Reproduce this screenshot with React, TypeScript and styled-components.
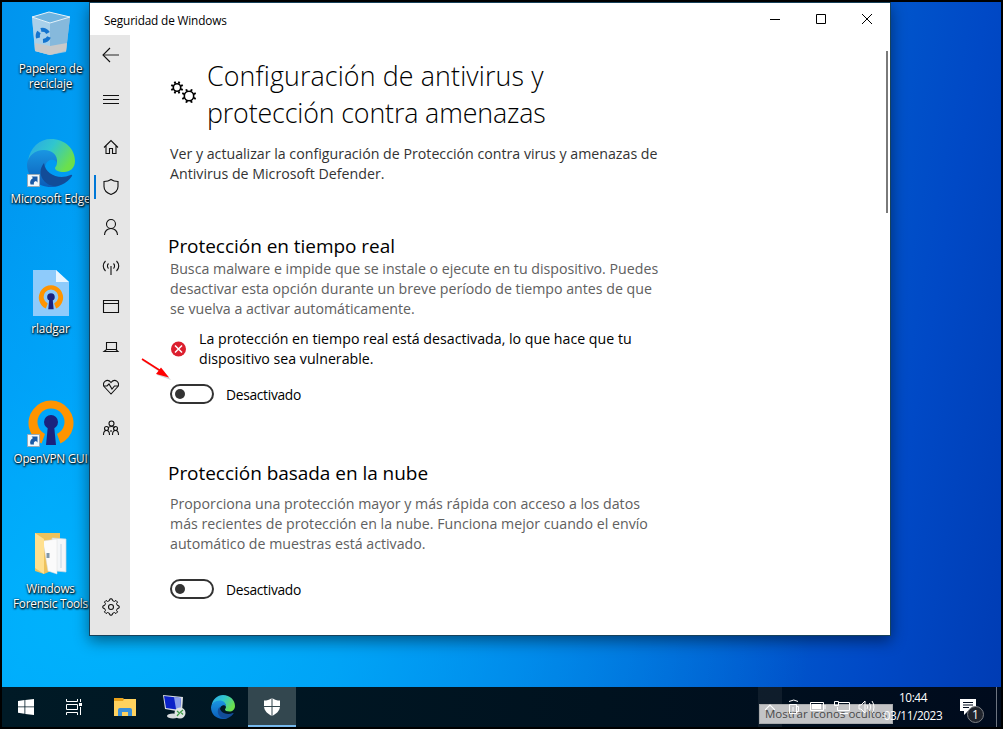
import React from 'react';
import styled, { createGlobalStyle } from 'styled-components';

const Global = createGlobalStyle`
  *{box-sizing:border-box}
  html,body{margin:0;padding:0}
  body{background:#000;font-family:"Open Sans","Noto Sans",sans-serif;overflow:hidden}
  svg{display:block;flex:none}
`;

const Screen = styled.div`
  width:1003px;height:729px;border:2px solid #000;display:flex;flex-direction:column;position:relative;overflow:hidden;background:#000;
`;
const Desktop = styled.main`
  position:relative;height:685px;
  background:
    radial-gradient(ellipse 700px 440px at 110px 620px, rgba(0,184,255,.8), rgba(0,170,255,.45) 55%, rgba(0,150,255,0) 100%),
    linear-gradient(100deg,#0094ee 0%,#00a0f5 12%,#0090ea 40%,#0063d2 70%,#0049c6 88%,#003cb4 100%);
`;
const IconColumn = styled.div`
  width:97px;display:flex;flex-direction:column;
`;
const Shortcut = styled.div`
  height:130px;display:flex;flex-direction:column;align-items:center;padding-top:4px;
  > svg{height:52px}
`;
const Label = styled.span<{ $sp?: number }>`
  margin-top:3px;color:#fff;font-size:11.8px;line-height:15px;text-align:center;white-space:pre;letter-spacing:${p => p.$sp ?? -0.15}px;
  text-shadow:1px 1px 2px #000,0 1px 2px rgba(0,0,0,.8),0 0 2px rgba(0,0,0,.5);
`;
const Window = styled.section`
  position:absolute;left:87px;top:0;width:802px;height:634px;border:1px solid #17425c;
  background:#fff;box-shadow:0 5px 14px rgba(0,0,0,.45);display:flex;flex-direction:column;
`;
const TitleBar = styled.header`
  height:32px;flex:none;display:flex;align-items:center;padding-left:14px;font-size:11.8px;color:#000;
`;
const WindowTitle = styled.span`flex:1;letter-spacing:-.15px;padding-top:1px;`;
const WinButton = styled.div`width:46px;height:32px;display:flex;align-items:center;justify-content:center;`;
const Body = styled.div`flex:1;display:flex;min-height:0;`;
const Nav = styled.nav`
  width:40px;background:#e6e6e6;display:flex;flex-direction:column;
`;
const NavItem = styled.div<{ $h: number; $active?: boolean; $push?: boolean }>`
  height:${p => p.$h}px;display:flex;align-items:center;justify-content:center;
  padding-left:2px;margin-top:${p => (p.$push ? 'auto' : 0)};
  ${p => p.$active && 'background:linear-gradient(#0078d7,#0078d7) 4px 4px/2px 24px no-repeat;'}
`;
const Content = styled.div`flex:1;padding:22px 0 0 40px;`;
const Scroll = styled.div`width:4px;padding-top:16px;`;
const Thumb = styled.div`width:2px;height:162px;background:#7a7a7a;`;
const TitleRow = styled.div`display:flex;gap:11px;`;
const GearSlot = styled.div`padding-top:24px;width:26px;`;
const PageTitle = styled.h1`margin:0;font-weight:300;font-size:26.8px;line-height:37px;color:#000;`;
const Line = styled.span<{ $sp?: number }>`display:block;white-space:nowrap;letter-spacing:${p => p.$sp ?? 0}px;`;
const Para = styled.p<{ $c: string; $mt?: number }>`
  margin:${p => p.$mt ?? 0}px 0 0;font-size:14.2px;line-height:20px;color:${p => p.$c};
`;
const Heading = styled.h2<{ $mt: number }>`
  margin:${p => p.$mt}px 0 0 -2px;font-size:19px;font-weight:400;line-height:26px;color:#000;white-space:nowrap;letter-spacing:-.04px;
`;
const Alert = styled.div`display:flex;align-items:center;gap:13px;margin-top:10px;`;
const ToggleRow = styled.div<{ $mt: number }>`
  display:flex;align-items:center;gap:12px;height:20px;margin-top:${p => p.$mt}px;font-size:13.8px;color:#000;
`;
const ToggleText = styled.span`letter-spacing:-.3px;padding-top:1px;`;
const Toggle = styled.div`
  width:44px;height:20px;border:2px solid #333;border-radius:10px;display:flex;align-items:center;padding-left:3px;
  &::before{content:"";width:10px;height:10px;border-radius:50%;background:#333}
`;
const Pointer = styled.svg`position:absolute;left:50px;top:352px;`;
const Taskbar = styled.footer`
  height:40px;display:flex;background:linear-gradient(90deg,#001a26,#00121f 60%,#000b1d);color:#fff;
`;
const Task = styled.div<{ $active?: boolean; $w?: number }>`
  width:${p => p.$w ?? 49}px;display:flex;align-items:center;justify-content:center;
  ${p => p.$active && 'background:#33474f;border-bottom:2px solid #76b9ed;padding-top:2px;'}
`;
const Tray = styled.div`margin-left:auto;display:flex;position:relative;`;
const Chevron = styled.div`
  width:24px;background:rgba(255,255,255,.06);display:flex;align-items:center;justify-content:center;
  svg{position:relative;z-index:1}
`;
const TrayIcon = styled.div`width:24px;display:flex;align-items:center;justify-content:center;position:relative;z-index:1;`;
const Clock = styled.div`
  position:relative;z-index:1;
  width:69px;display:flex;flex-direction:column;align-items:center;font-size:11.8px;line-height:18px;padding:1px 0 0 1px;letter-spacing:-.4px;white-space:nowrap;
`;
const Notice = styled.div`width:49px;padding:11px 0 0 13px;position:relative;`;
const Edge = styled.div`width:5px;border-left:1px solid #6d7480;`;
const Count = styled.span`
  position:absolute;left:20px;top:19px;width:17px;height:17px;border-radius:50%;background:#20242c;border:1px solid #7d8085;
  font-size:12px;line-height:15px;text-align:center;
`;
const Tip = styled.div`
  position:absolute;left:1px;top:17px;width:134px;height:20px;background:#c3c4c6;border:1px solid #a9abad;
  color:#4a4a4a;font-size:11.5px;line-height:17px;padding-left:5px;white-space:nowrap;
`;

const EdgeLogo = ({ size, id }: { size: number; id: string }) => (
  <svg width={size} height={size} viewBox="0 0 48 48">
    <defs>
      <linearGradient id={id + 'a'} x1="0" y1="0" x2="1" y2=".5">
        <stop offset="0" stopColor="#2aa4e8" /><stop offset=".5" stopColor="#30c6cf" /><stop offset="1" stopColor="#6be04c" />
      </linearGradient>
      <linearGradient id={id + 'b'} x1="0" y1="0" x2="0" y2="1">
        <stop offset="0" stopColor="#1a96e2" /><stop offset="1" stopColor="#0b5cb8" />
      </linearGradient>
    </defs>
    <path d="M1 22C3 8 13 0 24 0c14 0 24 10 24 22 0 7-5 11-11 11-6 0-9-2-9-4 0-1 2-2 2-6 0-5-5-9-12-9C9 14 3 18 1 22Z" fill={`url(#${id}a)`} />
    <path d="M0 25c1-8 8-14 17-14 8 0 14 5 13 13-1-3-4-4-7-3-5 2-6 8-4 14 2 7 8 11 14 11-3 2-6 2-9 2C10 48 0 38 0 25Z" fill={`url(#${id}b)`} />
    <path d="M17 24c-3 4-5 9-2 15 4 7 12 10 19 7 5-2 9-6 11-9 .5-1-.5-1.500-1.500-1-11 5-25 0-26.500-12Z" fill="#124c98" />
  </svg>
);

const Arrow = () => (
  <g>
    <path d="M.5 35.500h12v12H.5z" fill="#f4f8fb" stroke="#9aabb8" />
    <path d="M3.500 45.500c-1-3 0-5 2.500-6.500L4.500 37.500H10.500V43.500L9 42c-2 .5-2.500 1.500-2 3.500Z" fill="#1a5aa8" />
  </g>
);

const VpnShape = () => (
  <g>
    <path d="M14.500 44.500A22.500 22.500 0 1 1 33.500 44.500L30 35a13.500 13.500 0 1 0-12 0Z" fill="#ff9400" />
    <circle cx="24" cy="23" r="7" fill="#1a237e" />
    <path d="M21 26h6l2 20H19Z" fill="#1a237e" />
  </g>
);

const BinIcon = () => (
  <svg width="40" height="52" viewBox="0 -1 40 52" fill="none">
    <path d="m1 10 17-5 21 5-4 35-16 3-15-4Z" fill="#8ec3e4" />
    <path d="m1 10 18 6v32L4 44Z" fill="#a9d0ea" />
    <path d="m19 16 20-6-4 34-16 4Z" fill="#86b9dc" />
    <path d="m4 36 15 3 17-3-1 8-16 4-15-4Z" fill="#c9c9c9" />
    <path d="m1 10 17-5 21 5-20 6Z" fill="#6fb4e0" stroke="#e3f1f9" />
    <path d="M7 31a7 7 0 0 1 1-6M10 23a6 6 0 0 1 7 3M18 30a7 7 0 0 1-6 4" stroke="#1474cf" strokeWidth="4" />
  </svg>
);

const VpnFile = () => (
  <svg width="36" height="52" viewBox="0 0 36 52">
    <path d="M0 4h23l13 12v34H0Z" fill="#8ecbfb" />
    <path d="M23 4v12h13Z" fill="#e9f6ff" />
    <g transform="translate(5 18.500) scale(.54)"><VpnShape /></g>
  </svg>
);

const FolderDesk = () => (
  <svg width="32" height="52" viewBox="0 -1 32 52">
    <path d="M0 6h25v34L9 47 0 44Z" fill="#eec25c" />
    <path d="m17 11 14 1v33l-10-1Z" fill="#f4f6f8" stroke="#c8d5df" strokeWidth=".7" />
    <path d="M26 17v24" stroke="#b9cede" strokeWidth=".8" />
    <path d="m8 14 14-2v35l-9-3Z" fill="#fbfbfb" stroke="#dcdcdc" strokeWidth=".5" />
    <path d="m0 6 9 6v35L0 41Z" fill="#ffe08f" />
    <path d="M11.500 26h3v5h-3z" fill="#7f96a8" />
  </svg>
);

const Gear = ({ s, w, sw = 1 }: { s: number; w: number; sw?: number }) => {
  const teeth = [[-13, 0.8], [-8, 1], [8, 1], [13, 0.8]];
  const pts = Array.from({ length: 8 }).flatMap((_, i) =>
    teeth.map(([a, r]) => {
      const t = ((i * 45 + a) * Math.PI) / 180;
      return `${(w / 2 + Math.cos(t) * r * s).toFixed(2)},${(w / 2 + Math.sin(t) * r * s).toFixed(2)}`;
    })
  );
  return <polygon points={pts.join(' ')} fill="none" stroke="currentColor" strokeWidth={sw} strokeLinejoin="round" />;
};

const Cog = ({ r }: { r: number }) => (
  <g fill="none" stroke="#000">
    <circle r={r} strokeWidth="1.600" />
    {[22.5, 67.5, 112.5, 157.5, 202.5, 247.5, 292.5, 337.5].map(a => (
      <path key={a} d={`M${r + 0.4} 0h2.200`} strokeWidth="1.900" transform={`rotate(${a})`} />
    ))}
  </g>
);

const Nv = ({ children }: { children: React.ReactNode }) => (
  <svg width="18" height="18" viewBox="0 0 18 18" fill="none" stroke="#111" strokeWidth="1.100">{children}</svg>
);

export default function App() {
  return (
    <Screen>
      <Global />
      <Desktop>
        <IconColumn>
          <Shortcut><BinIcon /><Label>{'Papelera de\nreciclaje'}</Label></Shortcut>
          <Shortcut>
            <svg width="48" height="52" viewBox="0 -3 48 52"><EdgeLogo size={48} id="e" /><Arrow /></svg>
            <Label>Microsoft Edge</Label>
          </Shortcut>
          <Shortcut><VpnFile /><Label>rladgar</Label></Shortcut>
          <Shortcut>
            <svg width="48" height="52" viewBox="0 -3 48 52"><VpnShape /><Arrow /></svg>
            <Label $sp={-0.25}>OpenVPN GUI</Label>
          </Shortcut>
          <Shortcut><FolderDesk /><Label $sp={-0.25}>{'Windows\nForensic Tools'}</Label></Shortcut>
        </IconColumn>

        <Window>
          <TitleBar>
            <WindowTitle>Seguridad de Windows</WindowTitle>
            <WinButton><svg width="10" height="10"><path d="M0 5.500h10" stroke="#000" /></svg></WinButton>
            <WinButton><svg width="10" height="10"><path d="M.5.5h9v9h-9z" fill="none" stroke="#000" /></svg></WinButton>
            <WinButton><svg width="10" height="10"><path d="m0 0 10 10M10 0 0 10" stroke="#000" /></svg></WinButton>
          </TitleBar>
          <Body>
            <Nav>
              <NavItem $h={40}><Nv><path d="M1 9h16" stroke="#666" strokeWidth="1.500" /><path d="M8 2 1 9l7 7" /></Nv></NavItem>
              <NavItem $h={48}><Nv><path d="M1 5.500h16M1 9.500h16M1 13.500h16" /></Nv></NavItem>
              <NavItem $h={48}><Nv><path d="m2 9.500 7-7 7 7M4 8v7.500h3.500v-5h3v5H14V8" /></Nv></NavItem>
              <NavItem $h={32} $active><Nv><path d="M9 1.500c2 1.500 4.500 2 7 2v5c0 4-3 6.500-7 8-4-1.500-7-4-7-8v-5c2.500 0 5-.5 7-2Z" /></Nv></NavItem>
              <NavItem $h={48}><Nv><circle cx="9" cy="6" r="4.500" /><path d="M2.500 17c0-4 3-6.500 6.500-6.500s6.500 2.500 6.500 6.500" /></Nv></NavItem>
              <NavItem $h={32}><Nv><path d="M9 8v9M6.500 10.500a3.500 3.500 0 0 1 0-5M11.500 10.500a3.500 3.500 0 0 0 0-5M3.500 13c-3-3-3-7 0-10M14.500 13c3-3 3-7 0-10" /></Nv></NavItem>
              <NavItem $h={48}><Nv><path d="M1.500 2.500h15v12h-15zM1.500 5.500h15" /></Nv></NavItem>
              <NavItem $h={32}><Nv><path d="M4.500 4.500h10v7h-10zM2 13.500h14l-2-2H4.500Z" /></Nv></NavItem>
              <NavItem $h={48}><Nv><path d="M9 16 2.500 9C-1 5 5-.5 9 4.500 13-.5 19 5 15.500 9ZM1 8h4l2-2 3 5 2.500-3H17" /></Nv></NavItem>
              <NavItem $h={34}><Nv><circle cx="9.500" cy="4.500" r="2.500" /><circle cx="4.500" cy="9.500" r="2" /><circle cx="13.500" cy="9.500" r="2" /><path d="M1.500 16c0-6 6-6 6 0M10.500 16c0-6 6-6 6 0M6 9c1-2 6-2 7 0M9 11v2" /></Nv></NavItem>
              <NavItem $h={56} $push><Nv><Gear s={8.2} w={18} /><circle cx="9" cy="9" r="2.500" /></Nv></NavItem>
            </Nav>
            <Content>
              <TitleRow>
                <GearSlot>
                  <svg width="27" height="26" viewBox="0 0 27 26"><g transform="translate(7 6.500)"><Cog r={3.7} /></g><g transform="translate(19 15)"><Cog r={4.7} /></g></svg>
                </GearSlot>
                <PageTitle><Line $sp={0.13}>Configuración de antivirus y</Line><Line $sp={-0.14}>protección contra amenazas</Line></PageTitle>
              </TitleRow>
              <Para $c="#333" $mt={13}>
                <Line>Ver y actualizar la configuración de Protección contra virus y amenazas de</Line>
                <Line>Antivirus de Microsoft Defender.</Line>
              </Para>
              <Heading $mt={49}>Protección en tiempo real</Heading>
              <Para $c="#606060">
                <Line>Busca malware e impide que se instale o ejecute en tu dispositivo. Puedes</Line>
                <Line>desactivar esta opción durante un breve período de tiempo antes de que</Line>
                <Line>se vuelva a activar automáticamente.</Line>
              </Para>
              <Alert>
                <svg width="16" height="16" viewBox="0 0 16 16"><circle cx="8.500" cy="8" r="7.500" fill="#dc1f2e" /><path d="m5 4.500 7 7m0-7-7 7" stroke="#fff" strokeWidth="1.500" /></svg>
                <Para $c="#000">
                  <Line>La protección en tiempo real está desactivada, lo que hace que tu</Line>
                  <Line>dispositivo sea vulnerable.</Line>
                </Para>
              </Alert>
              <ToggleRow $mt={15}><Toggle /><ToggleText>Desactivado</ToggleText></ToggleRow>
              <Heading $mt={56}>Protección basada en la nube</Heading>
              <Para $c="#606060" $mt={8}>
                <Line>Proporciona una protección mayor y más rápida con acceso a los datos</Line>
                <Line>más recientes de protección en la nube. Funciona mejor cuando el envío</Line>
                <Line>automático de muestras está activado.</Line>
              </Para>
              <ToggleRow $mt={25}><Toggle /><ToggleText>Desactivado</ToggleText></ToggleRow>
            </Content>
            <Scroll><Thumb /></Scroll>
          </Body>
          <Pointer width="32" height="28" viewBox="0 0 32 28">
            <path d="m3 5 20 13" stroke="#999" strokeOpacity=".4" strokeWidth="2" />
            <path d="m17 20 14 5-10-12Z" fill="#999" fillOpacity=".4" />
            <path d="m2 4 18 11.500" stroke="#f00" strokeWidth="1.600" /><path d="m29 22.500-13-3.500 5-6.500Z" fill="#f00" />
          </Pointer>
        </Window>
      </Desktop>

      <Taskbar>
        <Task $w={48}><svg width="16" height="16" viewBox="0 0 16 16" fill="#fff"><path d="m0 2 6.500-.9v6.400H0ZM7.300 1 16 0v7.500H7.300ZM0 8.300h6.500v6.400L0 13.800ZM7.300 8.300H16V16l-8.700-1.100Z" /></svg></Task>
        <Task><svg width="17" height="16" fill="none" stroke="#fff"><path d="M.5 0v2.500h11V0M.5 16v-2.500h11V16M.5 5.500h11v5H.5zM14.500 0v3M14.500 8v8" /><path d="M13 4h3v3h-3z" fill="#fff" stroke="none" /></svg></Task>
        <Task $w={51}><svg width="22" height="18"><path d="M0 0h8l2 1h12v17H0Z" fill="#ffd25e" /><path d="M0 0h8l2 1-1 2H0Z" fill="#e8a11a" /><path d="M4 18v-6q0-2 2-2h10q2 0 2 2v6h-4v-4H8v4Z" fill="#3a8fd9" /></svg></Task>
        <Task $w={48}><svg width="24" height="24"><path d="m1 0 20 2-1 15-17-3Z" fill="#d8dde2" /><path d="m2 1 17 2-1 12-14-2Z" fill="#0a22c8" /><path d="m12 2 7 1-1 12-4-1Z" fill="#8aa0ea" /><ellipse cx="11" cy="21" rx="6" ry="2.500" fill="#d7dadd" /><circle cx="18" cy="18" r="5.500" fill="#dfe5e2" /><path d="m15 16 2.500 2-2.500 3M21 15l-2.500 2 2.500 2.500" stroke="#3b9b45" strokeWidth="1.200" fill="none" /></svg></Task>
        <Task $w={50}><EdgeLogo size={24} id="t" /></Task>
        <Task $active $w={48}><svg width="18" height="18" viewBox="0 0 18 18"><path d="M9 0c3 2 5 2.500 8 2.500V8c0 5-4 8-8 10-4-2-8-5-8-10V2.500C4 2.500 6 2 9 0Z" fill="#fff" /><path d="M9 0v18M0 8.500h18" stroke="#33474f" /></svg></Task>
        <Tray>
          <Chevron><svg width="10" height="6"><path d="m0 6 5-5 5 5" fill="none" stroke="#fff" strokeWidth="1.200" /></svg></Chevron>
          <TrayIcon><svg width="12" height="16" fill="none" stroke="#fff"><path d="M1 2.500q5-3 9 0M1.500 5.500h7v9h-7zM8.500 7.500h2v5h-2M5 8v4" /></svg></TrayIcon>
          <TrayIcon><svg width="16" height="10"><path d="M.5.5h13v8H.5zM15 3v4" fill="none" stroke="#fff" /><path d="M2 2h9v5H2z" fill="#fff" /></svg></TrayIcon>
          <TrayIcon><svg width="16" height="13" fill="none" stroke="#fff"><path d="M5 1.500h10.500v8H3.500V6M6 12.500h8M.5.500h4v4h-4z" /></svg></TrayIcon>
          <TrayIcon><svg width="17" height="14" fill="none" stroke="#fff"><path d="M1 5h2l4-4v12L3 9H1ZM9 5q1 2 0 4M11.500 3q2.500 4 0 8M14 1q4 6 0 12" /></svg></TrayIcon>
          <Clock><span>10:44</span><span>03/11/2023</span></Clock>
          <Notice><svg width="17" height="17"><path d="M0 1h16v12H8l-4 4v-4H0Z" fill="#fff" /><path d="M3 4.500h10M3 7h10M3 9.500h6" stroke="#000b1d" /></svg><Count>1</Count></Notice>
          <Edge />
          <Tip>Mostrar iconos ocultos</Tip>
        </Tray>
      </Taskbar>
    </Screen>
  );
}
